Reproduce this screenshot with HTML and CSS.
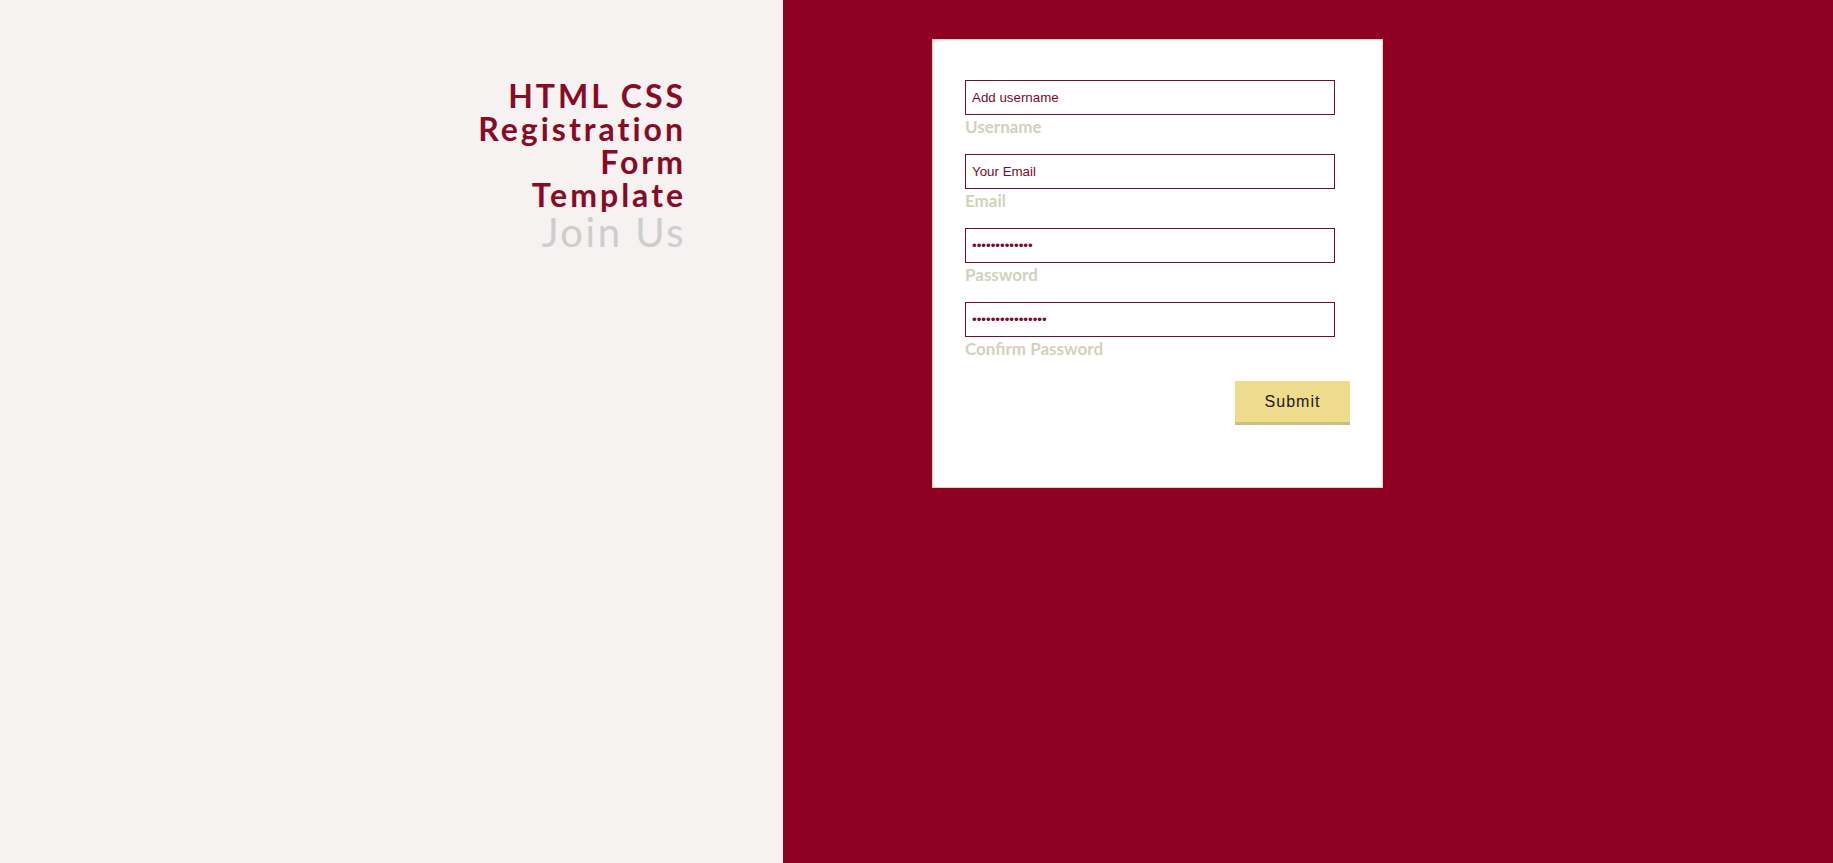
FILE: index.html
```html
<!DOCTYPE html>
<html lang="en">
<head>
<meta charset="utf-8">
<title>HTML CSS Registration Form Template</title>
<link rel="stylesheet" href="styles.css">
</head>
<body>
<div class="page">
  <section class="intro">
    <h1 class="title">
      <span class="title-line">HTML CSS</span>
      <span class="title-line">Registration</span>
      <span class="title-line">Form</span>
      <span class="title-line">Template</span>
    </h1>
    <p class="subtitle">Join Us</p>
  </section>
  <section class="side">
    <form class="card">
      <div class="field">
        <input class="input" type="text" value="Add username">
        <label class="label">Username</label>
      </div>
      <div class="field">
        <input class="input" type="text" value="Your Email">
        <label class="label">Email</label>
      </div>
      <div class="field">
        <input class="input" type="password" value="aaaaaaaaaaaaa">
        <label class="label">Password</label>
      </div>
      <div class="field">
        <input class="input" type="password" value="aaaaaaaaaaaaaaaa">
        <label class="label">Confirm Password</label>
      </div>
      <div class="actions">
        <button class="submit" type="button">Submit</button>
      </div>
    </form>
  </section>
</div>
</body>
</html>
```
FILE: styles.css
```css
* { box-sizing: border-box; }
html, body { margin: 0; padding: 0; height: 100%; }
body { font-family: "Lato", "Liberation Sans", sans-serif; }
.page { display: flex; height: 863px; }
.intro {
  width: 783px;
  flex: none;
  background: #f5f2f1;
  padding: 79px 97px 0 0;
  text-align: right;
}
.title {
  margin: 0;
  font-family: "Lato", sans-serif;
  font-weight: 700;
  font-size: 32px;
  letter-spacing: 3px;
  color: #8a0a25;
  display: flex;
  flex-direction: column;
  align-items: flex-end;
}
.title-line {
  display: block;
  height: 33px;
  line-height: 33px;
  white-space: nowrap;
}
.subtitle {
  margin: -3px 0 0;
  font-family: "Lato", sans-serif;
  font-weight: 400;
  font-size: 40px;
  line-height: 48px;
  letter-spacing: 2.5px;
  color: #cdcdcd;
}
.side {
  flex: 1;
  background: #8f0022;
  padding: 39px 0 0 149px;
}
.card {
  width: 451px;
  height: 449px;
  background: #fff;
  border: 1px solid #f3cfae;
  padding: 40px 32px 0 32px;
  display: flex;
  flex-direction: column;
}
.field { display: flex; flex-direction: column; align-items: flex-start; margin-bottom: 17px; }
.input {
  width: 370px;
  height: 35px;
  border: 1px solid #6e0f30;
  border-radius: 0;
  padding: 0 6px;
  font-family: "Liberation Sans", Arial, sans-serif;
  font-size: 13.33px;
  color: #7c0a2c;
  background: #fff;
  outline: none;
}
.label {
  margin-top: 1px;
  font-family: "Lato", sans-serif;
  font-weight: 700;
  font-size: 17px;
  line-height: 21px;
  color: #cfd3bb;
}
.actions { display: flex; justify-content: flex-end; margin-top: 5px; }
.submit {
  width: 115px;
  height: 44px;
  background: #efdb8c;
  border: none;
  border-bottom: 3px solid #cdbd82;
  font-family: "Liberation Sans", Arial, sans-serif;
  font-size: 16px;
  letter-spacing: 1px;
  color: #1a1a1a;
  padding: 0;
}
```
